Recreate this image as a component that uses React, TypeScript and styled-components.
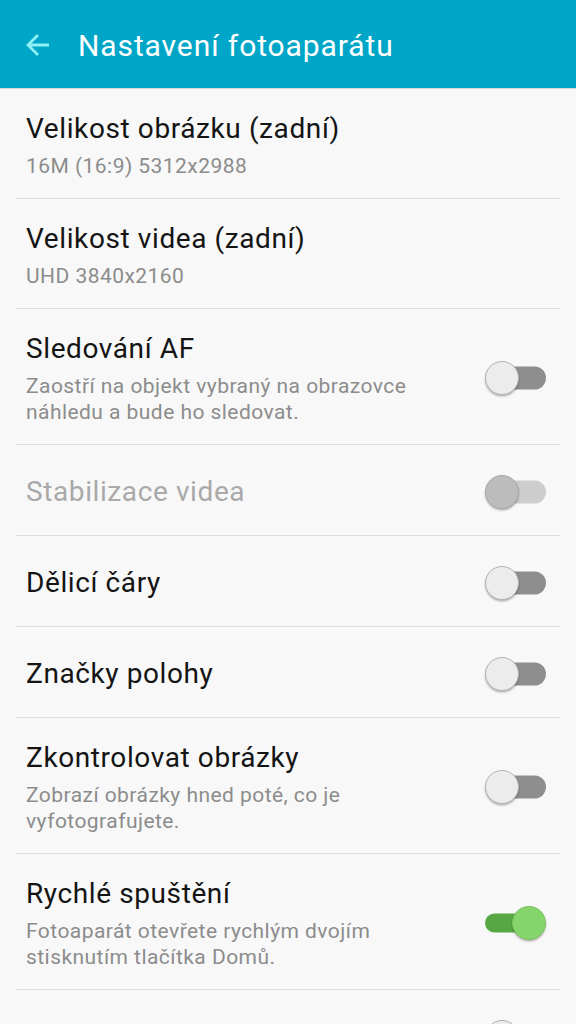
import { FC } from 'react';
import styled, { createGlobalStyle } from 'styled-components';

const GlobalStyle = createGlobalStyle`
  html, body {
    margin: 0;
    padding: 0;
    background: #f8f8f8;
    font-family: Roboto, 'Noto Sans', 'Liberation Sans', sans-serif;
  }
`;

type Item = {
  title: string;
  desc?: string;
  toggle?: 'off' | 'on' | 'disabled';
  disabled?: boolean;
};

const items: Item[] = [
  { title: 'Velikost obrázku (zadní)', desc: '16M (16:9) 5312x2988' },
  { title: 'Velikost videa (zadní)', desc: 'UHD 3840x2160' },
  {
    title: 'Sledování AF',
    desc: 'Zaostří na objekt vybraný na obrazovce náhledu a bude ho sledovat.',
    toggle: 'off',
  },
  { title: 'Stabilizace videa', toggle: 'disabled', disabled: true },
  { title: 'Dělicí čáry', toggle: 'off' },
  { title: 'Značky polohy', toggle: 'off' },
  {
    title: 'Zkontrolovat obrázky',
    desc: 'Zobrazí obrázky hned poté, co je vyfotografujete.',
    toggle: 'off',
  },
  {
    title: 'Rychlé spuštění',
    desc: 'Fotoaparát otevřete rychlým dvojím stisknutím tlačítka Domů.',
    toggle: 'on',
  },
  { title: 'Ovládání hlasem', toggle: 'off' },
];

const BackArrow: FC = () => (
  <svg width="26" height="26" viewBox="0 0 26 26">
    <path
      d="M24 13H3.5M13 3L3 13l10 10"
      fill="none"
      stroke="#8ef1f6"
      strokeWidth="2.8"
      strokeLinecap="butt"
      strokeLinejoin="miter"
    />
  </svg>
);

const App: FC = () => {
  return (
    <Screen>
      <GlobalStyle />
      <Header>
        <BackArrow />
        <HeaderTitle>Nastavení fotoaparátu</HeaderTitle>
      </Header>
      <List>
        {items.map(item => (
          <Row key={item.title}>
            <Texts>
              <Title $disabled={item.disabled}>{item.title}</Title>
              {item.desc && <Desc>{item.desc}</Desc>}
            </Texts>
            {item.toggle && (
              <Switch $state={item.toggle}>
                <Track $state={item.toggle} />
                <Thumb $state={item.toggle} />
              </Switch>
            )}
          </Row>
        ))}
      </List>
    </Screen>
  );
};

const Screen = styled.div`
  width: 576px;
  height: 1024px;
  overflow: hidden;
  background: #f8f8f8;
`;

const Header = styled.header`
  height: 88px;
  background: #00a6c7;
  display: flex;
  align-items: center;
  padding-left: 25px;
  gap: 27px;
  box-shadow: 0 1px 1px rgba(0, 0, 0, 0.12);
  svg {
    flex: none;
    margin-top: 1px;
  }
`;

const HeaderTitle = styled.h1`
  margin: 0;
  font-weight: 400;
  font-size: 30px;
  letter-spacing: 0.9px;
  color: #ffffff;
  margin-top: 2px;
`;

const List = styled.div`
  padding: 1px 16px 0;
`;

const Row = styled.div`
  box-sizing: border-box;
  min-height: 91px;
  display: flex;
  align-items: center;
  padding: 22px 14px 19px 10px;
  border-bottom: 1px solid #dedede;
`;

const Texts = styled.div`
  flex: 1;
  min-width: 0;
  padding-right: 40px;
`;

const Title = styled.div<{ $disabled?: boolean }>`
  font-size: 28px;
  line-height: 36px;
  letter-spacing: 0.6px;
  color: ${p => (p.$disabled ? '#a9a9a9' : '#141414')};
`;

const Desc = styled.div`
  margin-top: 6px;
  font-size: 21px;
  line-height: 26px;
  letter-spacing: 0.45px;
  color: #8c8c8c;
`;

type SwitchState = 'off' | 'on' | 'disabled';

const Switch = styled.div<{ $state: SwitchState }>`
  position: relative;
  flex: none;
  width: 61px;
  height: 34px;
`;

const Track = styled.div<{ $state: SwitchState }>`
  position: absolute;
  top: 50%;
  transform: translateY(-50%);
  left: ${p => (p.$state === 'on' ? '0' : '6px')};
  right: ${p => (p.$state === 'on' ? '14px' : '0')};
  height: ${p => (p.$state === 'on' ? '19px' : '23px')};
  border-radius: 12px;
  background: ${p =>
    p.$state === 'on' ? '#57a745' : p.$state === 'disabled' ? '#cdcdcd' : '#8e8e8e'};
`;

const Thumb = styled.div<{ $state: SwitchState }>`
  position: absolute;
  top: 0;
  ${p => (p.$state === 'on' ? 'right: 0;' : 'left: 0;')}
  box-sizing: border-box;
  width: 34px;
  height: 34px;
  border-radius: 50%;
  background: ${p =>
    p.$state === 'on' ? '#86d46c' : p.$state === 'disabled' ? '#bcbcbc' : '#ececec'};
  border: 1px solid
    ${p => (p.$state === 'on' ? '#78c45f' : p.$state === 'disabled' ? '#a9a9a9' : '#b4b4b4')};
  box-shadow: 0 1.5px 2px rgba(0, 0, 0, 0.28);
`;

export default App;
